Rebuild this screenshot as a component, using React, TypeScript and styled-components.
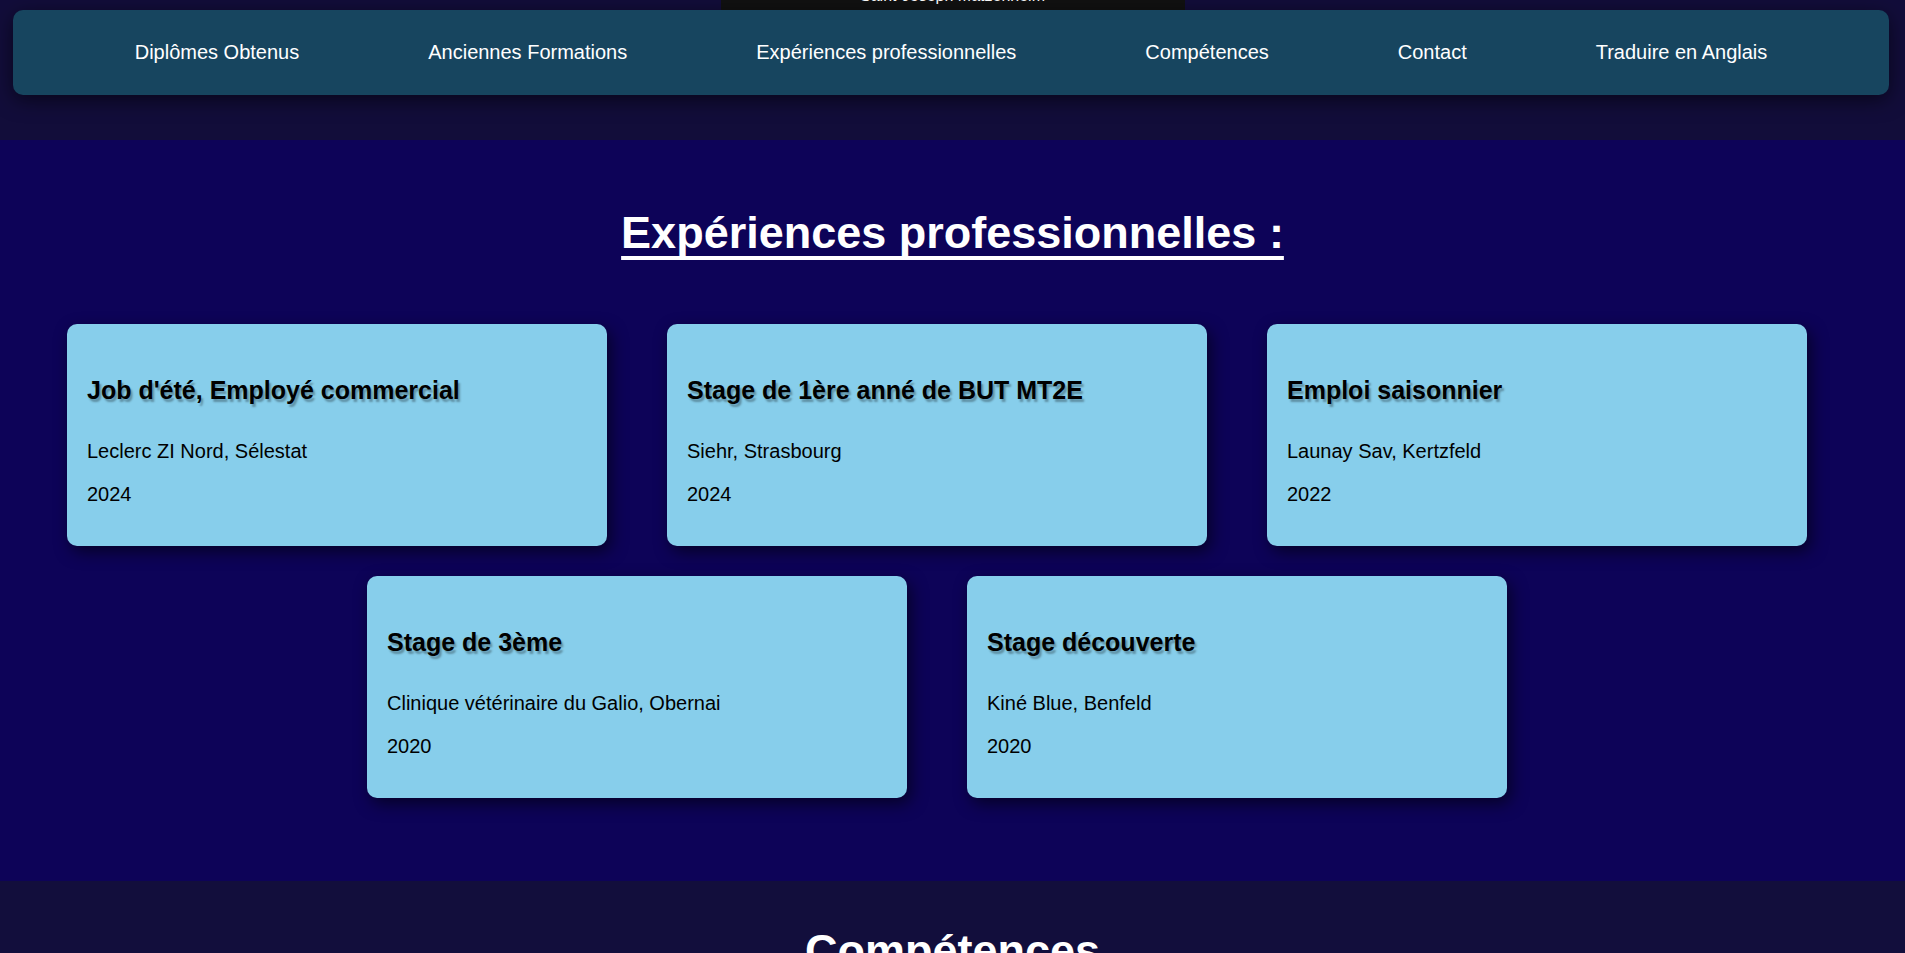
import React from "react";
import styled, { createGlobalStyle } from "styled-components";

const GlobalStyle = createGlobalStyle`
  html, body {
    margin: 0;
    padding: 0;
  }
  body {
    font-family: "Liberation Sans", Arial, Helvetica, sans-serif;
    background: #120e3c;
  }
`;

const Header = styled.header`
  background: #120d3a;
  height: 140px;
  display: flex;
  flex-direction: column;
`;

const Caption = styled.div`
  align-self: center;
  width: 464px;
  height: 10px;
  box-sizing: border-box;
  padding-bottom: 5px;
  background: #111111;
  color: #ffffff;
  font-size: 16px;
  display: flex;
  align-items: flex-end;
  justify-content: center;
  overflow: hidden;
  white-space: nowrap;
`;

const Nav = styled.nav`
  margin: 0 16px 0 13px;
  height: 85px;
  background: #17455f;
  border-radius: 10px;
  box-shadow: 0 5px 20px rgba(0, 0, 0, 0.55);
  display: flex;
  align-items: center;
  justify-content: center;
  gap: 129px;
`;

const NavLink = styled.a`
  color: #ffffff;
  font-size: 20px;
  text-decoration: none;
  white-space: nowrap;
`;

const Section = styled.section<{ $bg: string; $top: number; $bottom: number }>`
  background: ${(p) => p.$bg};
  padding: ${(p) => p.$top}px 0 ${(p) => p.$bottom}px;
  display: flex;
  flex-direction: column;
  align-items: center;
`;

const Title = styled.h2`
  margin: 0 0 65px;
  color: #ffffff;
  font-size: 45px;
  font-weight: bold;
  line-height: normal;
  text-decoration: underline;
  text-decoration-thickness: 4px;
  text-underline-offset: 8px;
  text-decoration-skip-ink: none;
`;

const CardGrid = styled.div`
  width: 100%;
  box-sizing: border-box;
  padding-right: 31px;
  display: flex;
  flex-wrap: wrap;
  justify-content: center;
  gap: 30px 60px;
`;

const Card = styled.article`
  width: 540px;
  box-sizing: border-box;
  padding: 20px;
  background: #87ceeb;
  border-radius: 10px;
  box-shadow: 4px 6px 16px rgba(0, 0, 0, 0.55);
  color: #000000;
`;

const CardTitle = styled.h3`
  margin: 32px 0 35px;
  font-size: 25px;
  font-weight: bold;
  line-height: normal;
  text-shadow: 2px 3px 2px rgba(0, 0, 0, 0.3);
`;

const CardText = styled.p`
  margin: 20px 0;
  font-size: 20px;
  line-height: normal;
`;

const navItems = [
  "Diplômes Obtenus",
  "Anciennes Formations",
  "Expériences professionnelles",
  "Compétences",
  "Contact",
  "Traduire en Anglais",
];

const experiences = [
  { title: "Job d'été, Employé commercial", place: "Leclerc ZI Nord, Sélestat", year: "2024" },
  { title: "Stage de 1ère anné de BUT MT2E", place: "Siehr, Strasbourg", year: "2024" },
  { title: "Emploi saisonnier", place: "Launay Sav, Kertzfeld", year: "2022" },
  { title: "Stage de 3ème", place: "Clinique vétérinaire du Galio, Obernai", year: "2020" },
  { title: "Stage découverte", place: "Kiné Blue, Benfeld", year: "2020" },
];

export default function App() {
  return (
    <>
      <GlobalStyle />
      <Header>
        <Caption>Saint-Joseph Matzenheim</Caption>
        <Nav>
          {navItems.map((item) => (
            <NavLink key={item} href="#">
              {item}
            </NavLink>
          ))}
        </Nav>
      </Header>
      <Section $bg="#0d0358" $top={67} $bottom={83}>
        <Title>Expériences professionnelles :</Title>
        <CardGrid>
          {experiences.map((e) => (
            <Card key={e.title}>
              <CardTitle>{e.title}</CardTitle>
              <CardText>{e.place}</CardText>
              <CardText>{e.year}</CardText>
            </Card>
          ))}
        </CardGrid>
      </Section>
      <Section $bg="#120e3c" $top={44} $bottom={200}>
        <Title>Compétences</Title>
      </Section>
    </>
  );
}
